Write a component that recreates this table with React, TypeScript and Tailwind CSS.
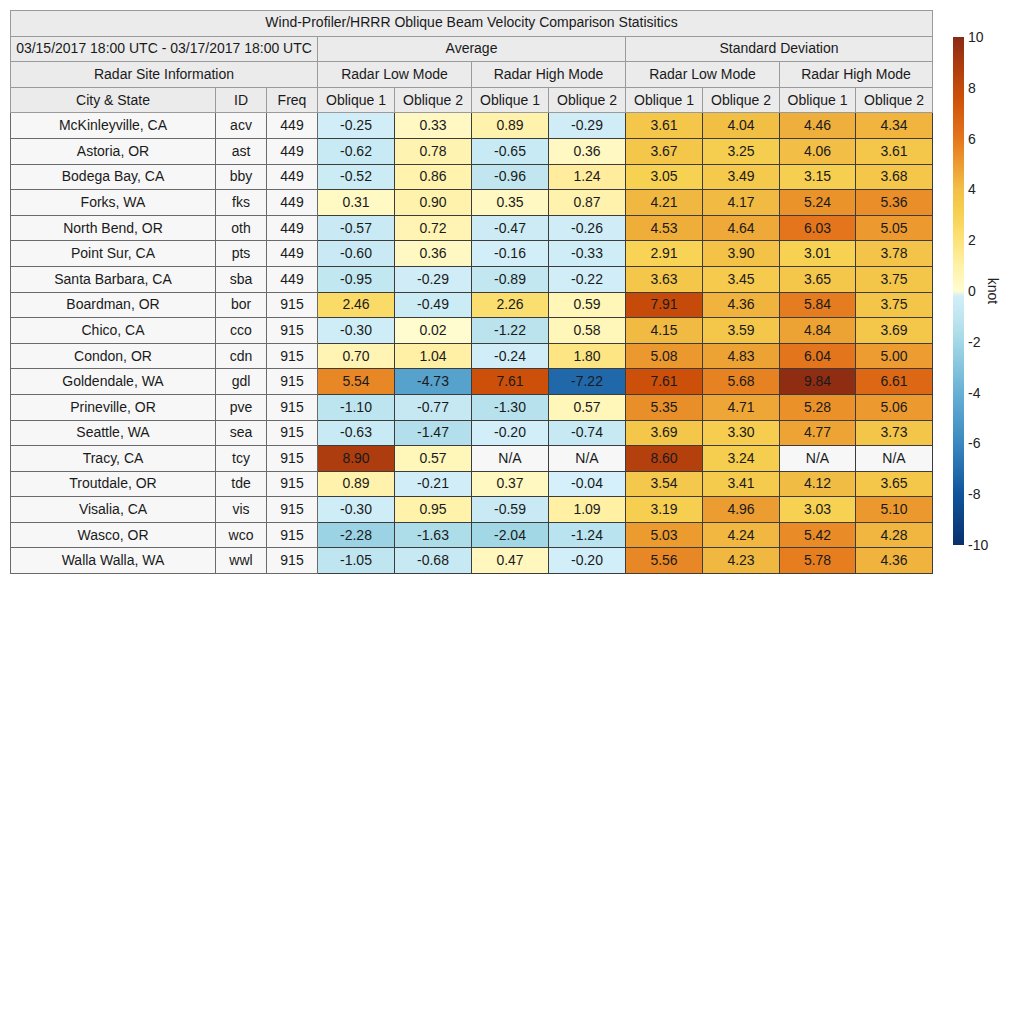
import React from "react";

type Row = [string, string, number, ...(number | null)[]];

const rows: Row[] = [
  ["McKinleyville, CA", "acv", 449, -0.25, 0.33, 0.89, -0.29, 3.61, 4.04, 4.46, 4.34],
  ["Astoria, OR", "ast", 449, -0.62, 0.78, -0.65, 0.36, 3.67, 3.25, 4.06, 3.61],
  ["Bodega Bay, CA", "bby", 449, -0.52, 0.86, -0.96, 1.24, 3.05, 3.49, 3.15, 3.68],
  ["Forks, WA", "fks", 449, 0.31, 0.9, 0.35, 0.87, 4.21, 4.17, 5.24, 5.36],
  ["North Bend, OR", "oth", 449, -0.57, 0.72, -0.47, -0.26, 4.53, 4.64, 6.03, 5.05],
  ["Point Sur, CA", "pts", 449, -0.6, 0.36, -0.16, -0.33, 2.91, 3.9, 3.01, 3.78],
  ["Santa Barbara, CA", "sba", 449, -0.95, -0.29, -0.89, -0.22, 3.63, 3.45, 3.65, 3.75],
  ["Boardman, OR", "bor", 915, 2.46, -0.49, 2.26, 0.59, 7.91, 4.36, 5.84, 3.75],
  ["Chico, CA", "cco", 915, -0.3, 0.02, -1.22, 0.58, 4.15, 3.59, 4.84, 3.69],
  ["Condon, OR", "cdn", 915, 0.7, 1.04, -0.24, 1.8, 5.08, 4.83, 6.04, 5.0],
  ["Goldendale, WA", "gdl", 915, 5.54, -4.73, 7.61, -7.22, 7.61, 5.68, 9.84, 6.61],
  ["Prineville, OR", "pve", 915, -1.1, -0.77, -1.3, 0.57, 5.35, 4.71, 5.28, 5.06],
  ["Seattle, WA", "sea", 915, -0.63, -1.47, -0.2, -0.74, 3.69, 3.3, 4.77, 3.73],
  ["Tracy, CA", "tcy", 915, 8.9, 0.57, null, null, 8.6, 3.24, null, null],
  ["Troutdale, OR", "tde", 915, 0.89, -0.21, 0.37, -0.04, 3.54, 3.41, 4.12, 3.65],
  ["Visalia, CA", "vis", 915, -0.3, 0.95, -0.59, 1.09, 3.19, 4.96, 3.03, 5.1],
  ["Wasco, OR", "wco", 915, -2.28, -1.63, -2.04, -1.24, 5.03, 4.24, 5.42, 4.28],
  ["Walla Walla, WA", "wwl", 915, -1.05, -0.68, 0.47, -0.2, 5.56, 4.23, 5.78, 4.36],
];

// value -> colour stops (knot)
const stops: [number, number[]][] = [
  [-10, [8, 48, 107]],
  [-8, [16, 84, 156]],
  [-6, [58, 136, 192]],
  [-4, [104, 176, 213]],
  [-2, [163, 216, 230]],
  [-1, [192, 230, 240]],
  [0, [214, 240, 250]],
  [0.001, [255, 252, 208]],
  [1, [255, 241, 168]],
  [2, [253, 226, 122]],
  [3, [247, 210, 82]],
  [4, [242, 192, 70]],
  [5, [236, 156, 48]],
  [6, [228, 118, 28]],
  [7.5, [208, 82, 10]],
  [9, [170, 58, 14]],
  [10, [138, 42, 20]],
];

function colorFor(v: number) {
  const x = Math.max(-10, Math.min(10, v));
  for (let i = 0; i < stops.length - 1; i++) {
    const [a, ca] = stops[i];
    const [b, cb] = stops[i + 1];
    if (x >= a && x <= b) {
      const t = b === a ? 0 : (x - a) / (b - a);
      const c = ca.map((k, j) => Math.round(k + (cb[j] - k) * t));
      return `rgb(${c[0]},${c[1]},${c[2]})`;
    }
  }
  return "rgb(255,255,255)";
}

const head = "border border-[#9a9a9a] bg-[#ebebeb] text-center font-normal";
const side = "border border-[#6a6a6a] bg-[#f7f7f7] text-center";
const cell = "border border-[#3c3c3c] text-center";

const colWidths = ["w-[205px]", "w-[51px]", "w-[51px]", "w-[77px]", "w-[77px]", "w-[77px]", "w-[77px]", "w-[77px]", "w-[77px]", "w-[76px]", "w-[77px]"];

function ColorBar() {
  const top = 7;
  const h = 508;
  const ticks = [10, 8, 6, 4, 2, 0, -2, -4, -6, -8, -10];
  const gradStops = [];
  for (let i = 0; i <= 100; i++) {
    const v = 10 - i * 0.2;
    gradStops.push(<stop key={i} offset={`${i}%`} stopColor={colorFor(v === 0 ? 0.001 : v)} />);
  }
  return (
    <svg width="79" height="530" className="mt-[20px] shrink-0" style={{ fontFamily: "'Liberation Sans', Arial, sans-serif" }}>
      <defs>
        <linearGradient id="cb" x1="0" y1="0" x2="0" y2="1">
          {gradStops}
        </linearGradient>
      </defs>
      <rect x="7" y={top} width="11" height={h} fill="url(#cb)" />
      {ticks.map((t) => (
        <text key={t} x="22" y={top + ((10 - t) / 20) * h} fontSize="14" fill="#222" dominantBaseline="central">
          {t}
        </text>
      ))}
      <text x="47" y={top + h / 2} fontSize="14" fill="#222" textAnchor="middle" dominantBaseline="central" transform={`rotate(90 47 ${top + h / 2})`}>
        knot
      </text>
    </svg>
  );
}

export default function App() {
  return (
    <div className="flex w-[1024px] h-[1024px] bg-white pl-[10px] pt-[10px] gap-[13px] font-['Liberation_Sans',Arial,sans-serif] text-[14px] text-[#1a1a1a]">
      <table className="table-fixed border-collapse w-[922px] self-start border border-[#8a8a8a]">
        <colgroup>
          {colWidths.map((w, i) => (
            <col key={i} className={w} />
          ))}
        </colgroup>
        <thead>
          <tr className="h-[25.6px]">
            <th colSpan={11} className={`${head} pb-[2px]`}>
              Wind-Profiler/HRRR Oblique Beam Velocity Comparison Statisitics
            </th>
          </tr>
          <tr className="h-[25.6px]">
            <th colSpan={3} className={head}>
              03/15/2017 18:00 UTC - 03/17/2017 18:00 UTC
            </th>
            <th colSpan={4} className={head}>
              Average
            </th>
            <th colSpan={4} className={head}>
              Standard Deviation
            </th>
          </tr>
          <tr className="h-[25.6px]">
            <th colSpan={3} className={head}>
              Radar Site Information
            </th>
            <th colSpan={2} className={head}>
              Radar Low Mode
            </th>
            <th colSpan={2} className={head}>
              Radar High Mode
            </th>
            <th colSpan={2} className={head}>
              Radar Low Mode
            </th>
            <th colSpan={2} className={head}>
              Radar High Mode
            </th>
          </tr>
          <tr className="h-[25.6px]">
            <th className={head}>City &amp; State</th>
            <th className={head}>ID</th>
            <th className={head}>Freq</th>
            {["Oblique 1", "Oblique 2", "Oblique 1", "Oblique 2", "Oblique 1", "Oblique 2", "Oblique 1", "Oblique 2"].map((t, i) => (
              <th key={i} className={head}>
                {t}
              </th>
            ))}
          </tr>
        </thead>
        <tbody>
          {rows.map((r) => (
            <tr key={r[1]} className="h-[25.6px]">
              <td className={side}>{r[0]}</td>
              <td className={side}>{r[1]}</td>
              <td className={side}>{r[2]}</td>
              {r.slice(3).map((v, i) => (
                <td
                  key={i}
                  className={cell}
                  style={{ backgroundColor: v === null ? "#f7f7f7" : colorFor(v as number) }}
                >
                  {v === null ? "N/A" : (v as number).toFixed(2)}
                </td>
              ))}
            </tr>
          ))}
        </tbody>
      </table>
      <ColorBar />
    </div>
  );
}
